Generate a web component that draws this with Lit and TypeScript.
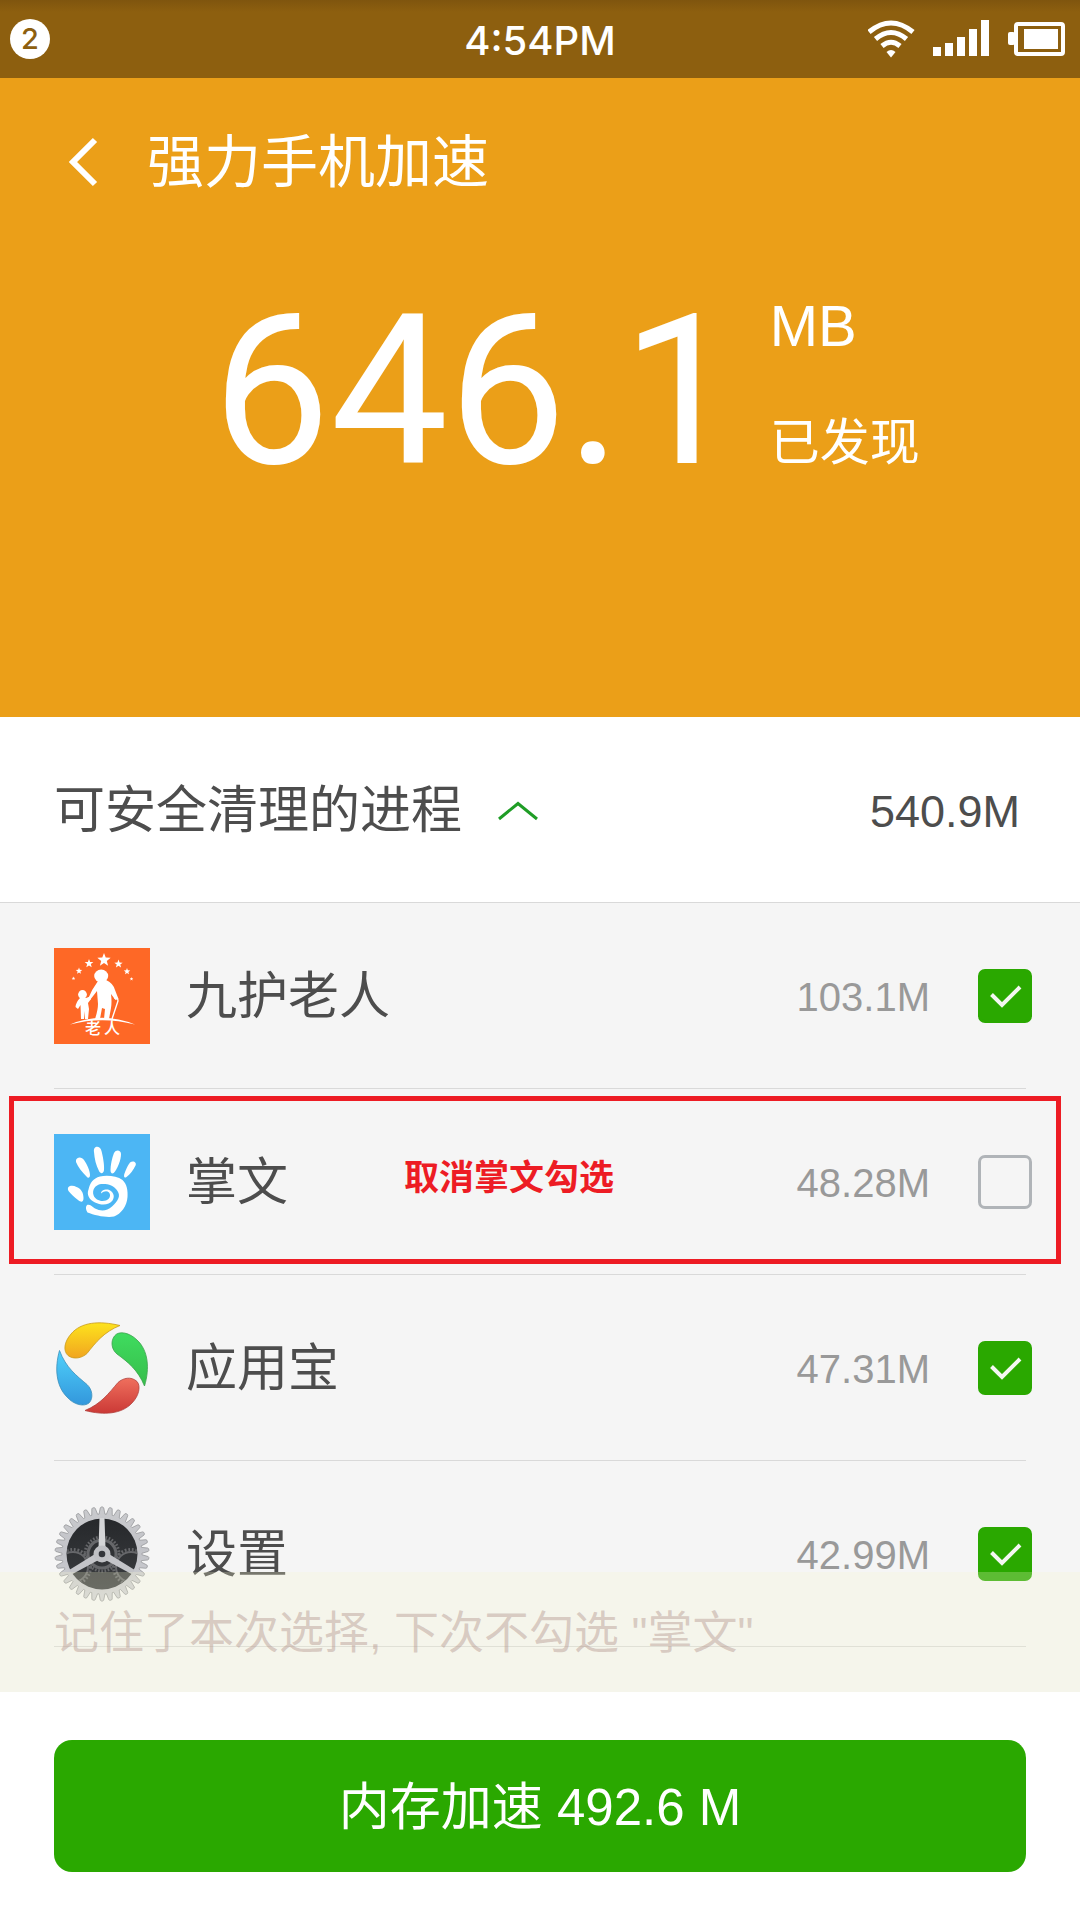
import { LitElement, html, svg, css } from "lit";
import { customElement, property, state } from "lit/decorators.js";

interface Proc {
  id: string;
  name: string;
  size: string;
  checked: boolean;
  note?: string;
}

const star = (cx: number, cy: number, r: number) => {
  const pts: string[] = [];
  for (let i = 0; i < 10; i++) {
    const a = (Math.PI / 5) * i - Math.PI / 2;
    const q = i % 2 ? r * 0.42 : r;
    pts.push(`${(cx + q * Math.cos(a)).toFixed(2)},${(cy + q * Math.sin(a)).toFixed(2)}`);
  }
  return svg`<polygon points=${pts.join(" ")} fill="#fff"/>`;
};

const gear = (cx: number, cy: number, ro: number, ri: number, n: number) => {
  const pts: string[] = [];
  const step = (Math.PI * 2) / n;
  const at = (r: number, a: number) =>
    pts.push(`${(cx + r * Math.cos(a)).toFixed(2)},${(cy + r * Math.sin(a)).toFixed(2)}`);
  for (let i = 0; i < n; i++) {
    const a = i * step - Math.PI / 2;
    at(ri, a - step * 0.4);
    at(ro - 0.8, a - step * 0.2);
    at(ro, a - step * 0.1);
    at(ro, a + step * 0.1);
    at(ro - 0.8, a + step * 0.2);
    at(ri, a + step * 0.4);
  }
  return `M${pts.join("L")}Z`;
};

const elderIcon = html`<svg viewBox="0 0 96 96" width="96" height="96" aria-hidden="true">
  <rect width="96" height="96" fill="#fe6826"/>
  ${star(50, 12, 7)}${star(35, 15.5, 4.6)}${star(64.5, 16, 4.4)}${star(25, 23, 3.4)}${star(73, 23.5, 3.4)}${star(19.5, 30.5, 1.9)}${star(77.5, 31, 1.9)}
  <g fill="#fff">
    <ellipse cx="47.200" cy="28" rx="7" ry="6.400"/>
    <path d="M44 33 L52 32 Q59 35 61 42 L64.500 51 L61.500 52 L57 46 Q58 54 57 60 L55 71 L50 71 L51 61 L48 60 L46 71 L41 71 Q44 62 44 56 L43 43 L36 52 L34 51 Q38 41 44 33Z"/>
    <circle cx="28.500" cy="46.500" r="4.400"/>
    <path d="M26 50 L32 50 L36 48.500 L37 51 L34 55 L35 61 L34 71 L31 71 L30.500 63 L30 71 L27 71 L26.500 57 L24 61 L21.500 59 Q22 54 26 50Z"/>
    <path d="M16 76.500 Q48 63 81 76.500 Q48 68 16 76.500Z"/>
  </g>
  <path d="M60 50 Q64 49 64 53 L58 71" fill="none" stroke="#fff" stroke-width="1.400"/>
  <text x="31" y="86" font-family="'Noto Sans CJK SC', sans-serif" font-size="16" font-weight="500" fill="#fff">老</text>
  <text x="50" y="86" font-family="'Noto Sans CJK SC', sans-serif" font-size="16" font-weight="500" fill="#fff">人</text>
</svg>`;

const palmIcon = html`<svg viewBox="0 0 96 96" width="96" height="96" aria-hidden="true">
  <rect width="96" height="96" fill="#4cb6f4"/>
  <g fill="#fff">
    <path d="M22 26 C23 22.500 28 22.500 30 26 C33 30 36 37 36 41 C36 44 34 44.500 32.500 42.500 C28 38 24 33 22 28Z"/>
    <path d="M40 18 C39 11.500 46 11 47.500 17 C49 23 50.500 31 50 36 C49.500 40 46.500 40 45 37 C42 31 40.500 25 40 18Z"/>
    <path d="M60 19 C62 15 67 16 67 20 C67 26 64 33 61 37.500 C59 40.500 56.500 40 56.500 36 C56.500 31 58 24 60 19Z"/>
    <path d="M76 28.500 C79 26 83 28 81.500 31.500 C79.500 36 76 40.500 72.500 43 C70 44.500 69.500 42.500 70.500 39.500 C72 35.500 73.500 31.500 76 28.500Z"/>
    <path d="M14.500 57 C12 52 18 50.500 22.500 53 C27.500 55 29.500 59 29.500 64 C29.500 68.500 27 68.500 24 66 C20 63 17 60 14.500 57Z"/>
    <path d="M33 71 C36 70 38 72.500 41 74.500 C47 77.500 53 77 58 72.500 C64 67 67 62 63.500 57 C60 51 53 49.500 47 50 C41 51 38 56 39.500 61 C41 66 47 68 52 66.500 C56 65 57 61 55 58.500 C53 56.500 50 57 47 59.500 C47 56 51 55 54 55.500 C59 57 61.500 62 58.500 66.500 C55 71.500 47 71.500 41 68.500 C35 65.500 32.500 60.500 34.500 55.500 C36 49 39 44.500 46 42.500 C53 41 63 42 68.500 46 C73 50 74 57 73.500 63 C73 72 67 80 60 82.500 C53 84 41 81.500 33.500 78.500 C31.500 75.500 31.500 72.500 33 71Z"/>
  </g>
</svg>`;

const swirlIcon = html`<svg viewBox="0 0 96 96" width="96" height="96" aria-hidden="true">
  <defs>
    <linearGradient id="y" x1="0" y1="0" x2="0" y2="1"><stop offset="0" stop-color="#fde31d"/><stop offset="1" stop-color="#f1a520"/></linearGradient>
    <linearGradient id="g" x1="0" y1="0" x2="0" y2="1"><stop offset="0" stop-color="#3fdc5f"/><stop offset="1" stop-color="#37bd4b"/></linearGradient>
    <linearGradient id="r" x1="0" y1="0" x2="0" y2="1"><stop offset="0" stop-color="#ef6f5d"/><stop offset="1" stop-color="#cb3936"/></linearGradient>
    <linearGradient id="b" x1="0" y1="0" x2="0" y2="1"><stop offset="0" stop-color="#4fd1fb"/><stop offset="1" stop-color="#3397dc"/></linearGradient>
  </defs>
  <g stroke-width=".8">
    <path d="M66 5.500 C45 .5 27 2 17 14 C10 22 9 31 14 35.500 C20 40 28 38 33 33.500 C42 22 50 12 66 5.500Z" fill="url(#y)" stroke="#c99a1c"/>
    <path d="M90.500 66 C96 48 94 30 83 20 C76 13 65 10 60.500 16 C56 22 58 30 63 34 C74 42 84 50 90.500 66Z" fill="url(#g)" stroke="#3aa24b"/>
    <path d="M31 90.500 C50 95.500 68 94 78 83 C85 76 87 66 83 61.500 C77 56 69 58 64 62.500 C55 73 47 84 31 90.500Z" fill="url(#r)" stroke="#b1403c"/>
    <path d="M5.500 30.500 C.5 48 2 66 13 77 C20 85 30 87 35 83 C40 78 38 69 33 64.500 C23 56 12 48 5.500 30.500Z" fill="url(#b)" stroke="#3d8fba"/>
  </g>
</svg>`;

const gearIcon = html`<svg viewBox="0 0 96 96" width="96" height="96" aria-hidden="true">
  <defs>
    <linearGradient id="m" x1="0" y1="0" x2="0" y2="1"><stop offset="0" stop-color="#c9cacd"/><stop offset=".5" stop-color="#c2c3c8"/><stop offset="1" stop-color="#d2d2d6"/></linearGradient>
    <linearGradient id="k" x1="0" y1="0" x2="0" y2="1"><stop offset="0" stop-color="#26282b"/><stop offset="1" stop-color="#3b3d40"/></linearGradient>
    <clipPath id="c"><circle cx="48" cy="48" r="35"/></clipPath>
  </defs>
  <path d=${gear(48, 48, 47, 40, 34)} fill="url(#m)" stroke="#97989a" stroke-width=".8"/>
  <circle cx="48" cy="48" r="35.500" fill="url(#k)"/>
  <g clip-path="url(#c)" fill="none" stroke="#66676a">
    <circle cx="19" cy="61" r="15" stroke-width="2"/>
    <circle cx="19" cy="61" r="17.500" stroke-width="3" stroke-dasharray="1.800 1.800"/>
    <circle cx="77" cy="61" r="15" stroke-width="2"/>
    <circle cx="77" cy="61" r="17.500" stroke-width="3" stroke-dasharray="1.800 1.800"/>
    <circle cx="48" cy="48" r="14" stroke-width="3"/>
    <circle cx="48" cy="48" r="17" stroke-width="3" stroke-dasharray="1.600 1.600"/>
  </g>
  <path d="M45.500 12 H50.500 L51.500 42 H44.500Z" fill="#d4d5d7"/>
  <path d="M45.500 12 H50.500 L51.500 42 H44.500Z" fill="#c3c4c8" transform="rotate(120 48 48)"/>
  <path d="M45.500 12 H50.500 L51.500 42 H44.500Z" fill="#c3c4c8" transform="rotate(240 48 48)"/>
  <circle cx="48" cy="48" r="8.500" fill="#bfc0c4"/>
  <circle cx="48" cy="48" r="3.300" fill="#33353a"/>
</svg>`;

const icons: Record<string, unknown> = {
  elder: elderIcon,
  palm: palmIcon,
  swirl: swirlIcon,
  gear: gearIcon,
};

const fonts = css`"Liberation Sans", "Noto Sans CJK SC", sans-serif`;

@customElement("status-bar")
class StatusBar extends LitElement {
  static styles = css`
    :host { display: block; }
    .bar {
      height: 78px; padding: 0 14px 0 10px; box-sizing: border-box;
      display: grid; grid-template-columns: 1fr auto 1fr; align-items: center;
      background: linear-gradient(#7f550e, #8d5f0f 12px); color: #fff;
      font-family: Inter, sans-serif; font-weight: 500;
    }
    .count {
      width: 40px; height: 40px; border-radius: 50%; background: #fff; color: #8d5f0f;
      font-size: 29px; line-height: 40px; text-align: center;
    }
    .time { font-size: 40px; line-height: 48px; padding: 3px 0 0 4px; }
    .signals { display: flex; justify-content: flex-end; align-items: center; }
  `;
  render() {
    return html`<div class="bar">
      <div class="count">2</div>
      <div class="time">4:54PM</div>
      <div class="signals">
        <svg viewBox="0 0 198 40" width="198" height="40" aria-hidden="true">
          <g fill="none" stroke="#fff" stroke-width="5">
            <path d="M1 13 Q23 -5 45 13"/>
            <path d="M7.500 20 Q23 7 38.500 20"/>
            <path d="M14 27 Q23 19.500 32 27"/>
          </g>
          <path d="M18.500 33 Q23 29 27.500 33 L23 38.500Z" fill="#fff"/>
          <g fill="#fff">
            <rect x="65" y="28" width="8" height="9"/><rect x="77" y="24" width="8" height="13"/>
            <rect x="89" y="18" width="8" height="19"/><rect x="101" y="10" width="8" height="27"/>
            <rect x="113" y="1" width="8" height="36"/>
            <rect x="140" y="13" width="7" height="13" rx="2"/><rect x="156" y="10" width="34" height="20"/>
          </g>
          <rect x="148" y="5" width="47" height="30" rx="2" fill="none" stroke="#fff" stroke-width="4"/>
        </svg>
      </div>
    </div>`;
  }
}

@customElement("process-row")
class ProcessRow extends LitElement {
  @property({ attribute: false }) proc!: Proc;
  static styles = css`
    :host { display: block; padding: 0 54px; font-family: ${fonts}; }
    .row {
      position: relative; display: flex; align-items: center;
      height: 186px; box-sizing: border-box; border-bottom: 1px solid #d9d9d9;
    }
    .icon { display: flex; margin-right: 36px; }
    .name { flex: 1; font-size: 51px; line-height: 60px; padding-top: 2px; color: #4d4d4d; }
    .size { font-size: 40px; line-height: 48px; padding-top: 2px; color: #999; margin-right: 48px; }
    .check { display: grid; width: 54px; height: 54px; margin-right: -6px; }
    .box {
      appearance: none; width: 54px; height: 54px; margin: 0; box-sizing: border-box;
      border: 3px solid #b0b4b8; border-radius: 7px; grid-area: 1 / 1;
    }
    .box:checked { background: #2aa800; border-color: #2aa800; }
    .tick { grid-area: 1 / 1; pointer-events: none; z-index: 1; }
    .callout {
      position: absolute; left: -45px; right: -35px; top: 7px; bottom: 10px; box-sizing: border-box;
      border: 5px solid #ed1c24; display: flex; align-items: center; padding: 0 0 4px 390px;
      color: #ed1c24; font-size: 35px; font-weight: 700; line-height: 42px; pointer-events: none;
    }
  `;
  render() {
    const p = this.proc;
    return html`<div class="row">
      <span class="icon">${icons[p.id]}</span>
      <label class="name" for="box">${p.name}</label>
      <span class="size">${p.size}</span>
      <span class="check">
        <input class="box" id="box" type="checkbox" .checked=${p.checked} @change=${this.toggle}>
        ${p.checked
          ? html`<svg class="tick" viewBox="0 0 54 54" width="54" height="54" aria-hidden="true"><path d="M13.500 25.500 L24 36 L42 18" fill="none" stroke="#f4f7f2" stroke-width="4"/></svg>`
          : null}
      </span>
      ${p.note ? html`<div class="callout">${p.note}</div>` : null}
    </div>`;
  }
  private toggle(e: Event) {
    this.proc = { ...this.proc, checked: (e.target as HTMLInputElement).checked };
  }
}

@customElement("app-root")
class AppRoot extends LitElement {
  @state() private procs: Proc[] = [
    { id: "elder", name: "九护老人", size: "103.1M", checked: true },
    { id: "palm", name: "掌文", size: "48.28M", checked: false, note: "取消掌文勾选" },
    { id: "swirl", name: "应用宝", size: "47.31M", checked: true },
    { id: "gear", name: "设置", size: "42.99M", checked: true },
  ];
  static styles = css`
    :host {
      display: flex; flex-direction: column; min-height: 100vh; background: #fff;
      font-family: ${fonts}; color: #4d4d4d;
    }
    .hero { background: #eb9f18; color: #fff; padding-bottom: 221px; }
    .nav { display: flex; align-items: center; padding: 50px 60px 0 66px; gap: 47px; }
    .back { display: flex; padding: 0; border: 0; background: none; color: inherit; }
    .title { margin: 0; font-size: 57px; font-weight: 400; line-height: 68px; }
    .total { display: flex; justify-content: center; gap: 30px; padding: 90px 0 0 52px; }
    .amount { font-family: Roboto, "Liberation Sans", sans-serif; font-size: 210px; line-height: 210px; }
    .units { display: flex; flex-direction: column; gap: 52px; padding-top: 10px; }
    .unit { font-size: 58px; line-height: 60px; }
    .found { font-size: 50px; line-height: 70px; }
    .group {
      display: flex; align-items: center; height: 186px; padding: 0 60px 0 54px;
      box-sizing: border-box; border-bottom: 1px solid #d9d9d9;
    }
    .toggle {
      display: flex; align-items: center; gap: 36px; padding: 2px 0 0; border: 0; background: none;
      font: inherit; color: inherit; font-size: 51px; line-height: 60px;
    }
    .sum { margin-left: auto; font-size: 45px; line-height: 54px; padding-top: 4px; }
    .list { position: relative; height: 789px; overflow: hidden; background: #f5f5f5; }
    .toast {
      position: absolute; left: 0; right: 0; bottom: 0; height: 120px; padding: 4px 54px 0;
      display: flex; align-items: center; box-sizing: border-box;
      background: rgba(249, 248, 208, 0.25); font-size: 45px; line-height: 54px; color: rgba(175, 143, 135, 0.42);
    }
    .footer { padding: 48px 54px; }
    .boost {
      display: block; width: 100%; height: 132px; border: 0; border-radius: 18px; padding: 4px 0 0;
      background: #2aa800; color: #fff; font-family: inherit; font-size: 51px; line-height: 60px;
    }
  `;
  render() {
    return html`
      <status-bar></status-bar>
      <header class="hero">
        <div class="nav">
          <button class="back" aria-label="返回">
            <svg viewBox="0 0 34 50" width="34" height="50" aria-hidden="true"><path d="M29 3 L7 25 L29 47" fill="none" stroke="#fff" stroke-width="6"/></svg>
          </button>
          <h1 class="title">强力手机加速</h1>
        </div>
        <div class="total">
          <div class="amount">646.1</div>
          <div class="units"><div class="unit">MB</div><div class="found">已发现</div></div>
        </div>
      </header>
      <section class="group">
        <button class="toggle" aria-expanded="true">可安全清理的进程
          <svg viewBox="0 0 40 20" width="40" height="20" aria-hidden="true"><path d="M1 18 L20 2.500 L39 18" fill="none" stroke="#1f9d26" stroke-width="3"/></svg>
        </button>
        <span class="sum">540.9M</span>
      </section>
      <main class="list">
        ${this.procs.map((p) => html`<process-row .proc=${p}></process-row>`)}
        <div class="toast" role="status">记住了本次选择, 下次不勾选 "掌文"</div>
      </main>
      <footer class="footer"><button class="boost">内存加速 492.6 M</button></footer>
    `;
  }
}
